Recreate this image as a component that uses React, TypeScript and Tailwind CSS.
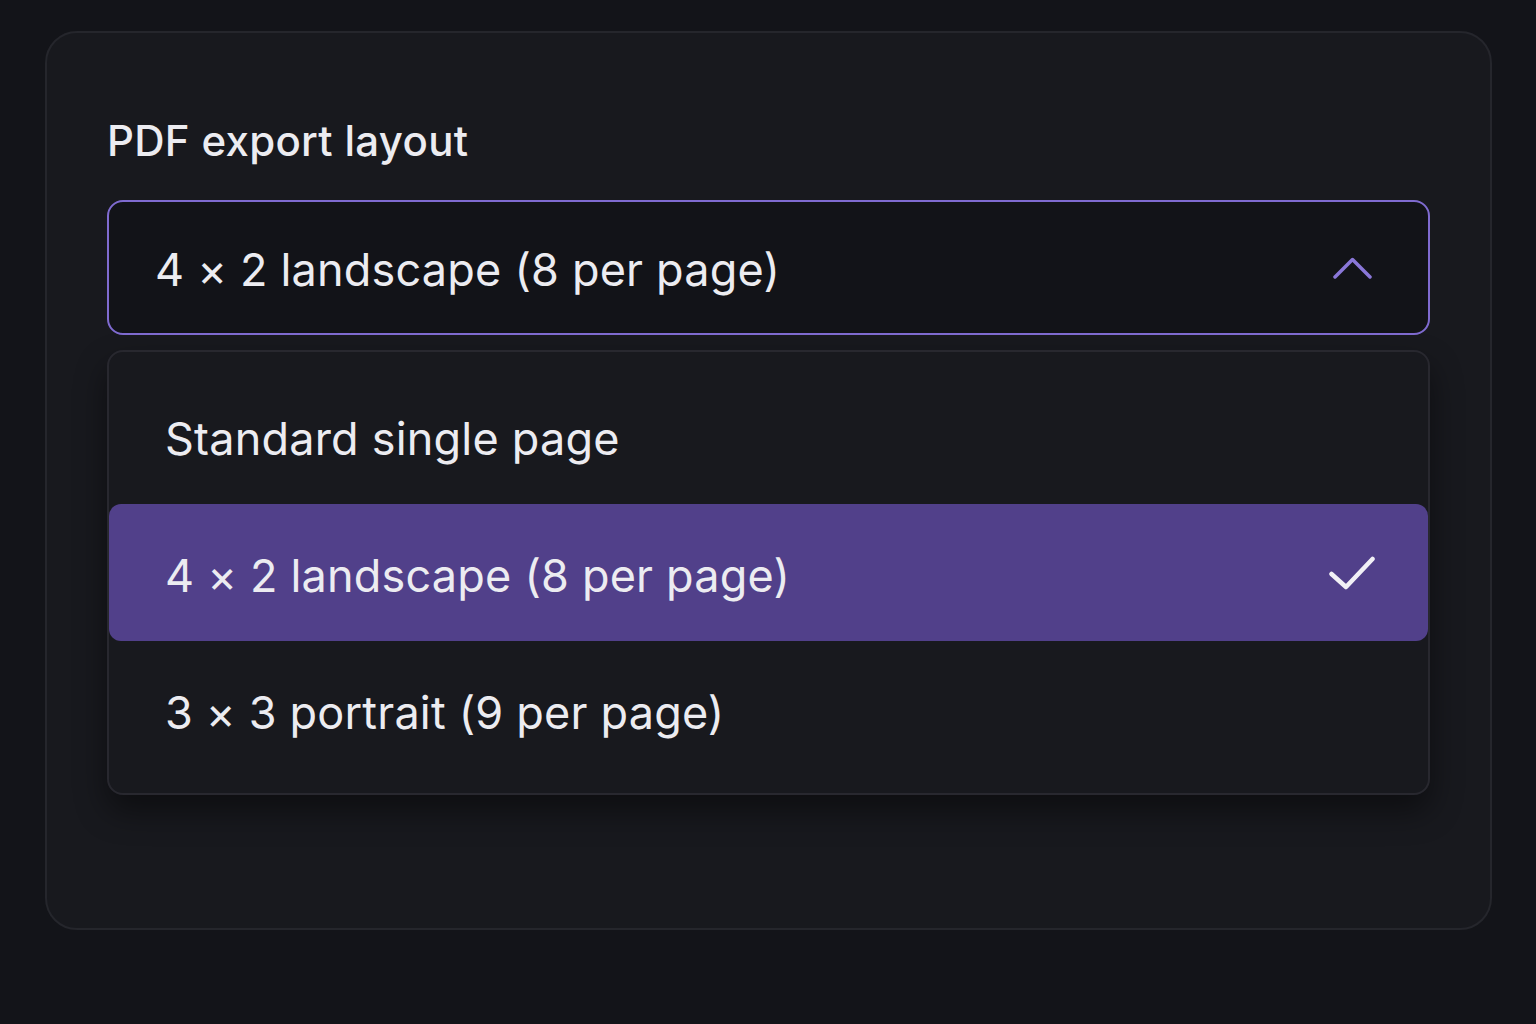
const options = [
  { id: 'standard', label: 'Standard single page' },
  { id: '4x2', label: '4 × 2 landscape (8 per page)' },
  { id: '3x3', label: '3 × 3 portrait (9 per page)' },
];

function ChevronUpIcon() {
  return (
    <svg width="39" height="22" viewBox="0 0 39 22" fill="none" className="text-[#8a77d8]">
      <polyline points="2,20 19.5,2.5 37,20" stroke="currentColor" strokeWidth="3.5" strokeLinecap="round" strokeLinejoin="round" />
    </svg>
  );
}

function CheckIcon() {
  return (
    <svg width="46" height="34" viewBox="0 0 46 34" fill="none" className="text-[#f1f0f6]">
      <polyline points="2.5,18 17,31 43.5,3" stroke="currentColor" strokeWidth="4.5" strokeLinecap="round" strokeLinejoin="round" />
    </svg>
  );
}

export default function App() {
  const selected = '4x2';
  const current = options.find(o => o.id === selected);

  return (
    <div
      className="w-[1536px] h-[1024px] bg-[#131419] pt-[31px] pl-[45px] pr-[44px]"
      style={{ fontFamily: 'Inter, "Noto Sans", sans-serif' }}
    >
      <div className="h-[899px] rounded-[32px] border-2 border-[#25262c] bg-[#18191e] px-[60px] pt-[80px]">
        {/* Label */}
        <label className="block text-[42px] leading-[56px] font-medium text-[#ececf1] tracking-[0.3px]">
          PDF export layout
        </label>

        {/* Trigger */}
        <button className="mt-[31px] w-full h-[135px] flex items-center justify-between rounded-[16px] border-2 border-[#7f6bd0] bg-[#121318] pl-[46px] pr-[56px]">
          <span className="pt-[4px] text-[45px] text-[#ececf1] tracking-[0.2px]">{current?.label}</span>
          <ChevronUpIcon />
        </button>

        {/* Menu */}
        <div className="mt-[15px] rounded-[16px] border-2 border-[#28282f] bg-[#18191e] py-[15px] shadow-[0_16px_32px_rgba(0,0,0,0.45)]">
          {options.map(option => {
            const active = option.id === selected;
            return (
              <div
                key={option.id}
                className={
                  active
                    ? 'h-[137px] flex items-center justify-between rounded-[12px] bg-[#51408a] pl-[56px] pr-[53px]'
                    : 'h-[137px] flex items-center justify-between pl-[56px] pr-[53px]'
                }
              >
                <span className="pt-[6px] text-[45px] text-[#ececf1] tracking-[0.2px]">{option.label}</span>
                {active && <CheckIcon />}
              </div>
            );
          })}
        </div>
      </div>
    </div>
  );
}
